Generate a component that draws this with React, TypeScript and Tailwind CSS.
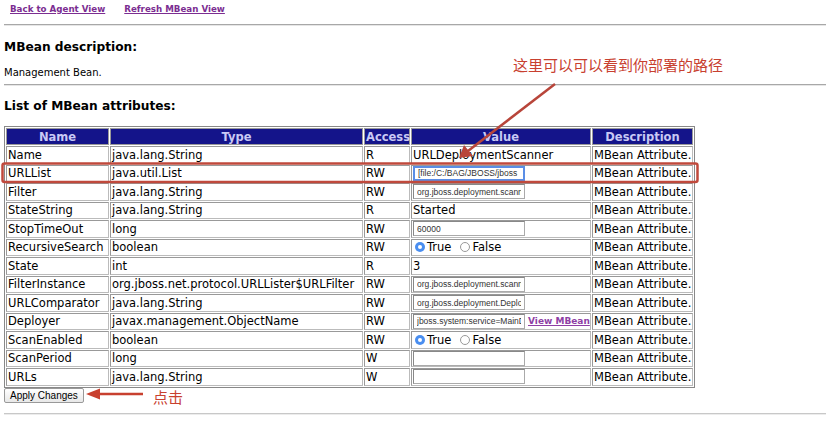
import type { ReactNode } from "react";

type Row = {
  name: string;
  type: string;
  access: string;
  value: ReactNode;
};

function TextBox({ value, focused }: { value?: string; focused?: boolean }) {
  return (
    <input
      readOnly
      value={value ?? ""}
      className={`block h-[15px] w-[112px] bg-white px-[3px] py-0 font-['Liberation_Sans',sans-serif] text-[8.5px] text-[#333] outline-none ${
        focused
          ? "border-2 border-[#5b8ee6]"
          : "border border-[#aaa] border-t-[#888] border-l-[#888]"
      }`}
    />
  );
}

function Radio({ checked }: { checked?: boolean }) {
  if (checked) {
    return (
      <span className="inline-flex h-[10px] w-[10px] items-center justify-center rounded-full bg-[#4a8ef0]">
        <span className="h-[4px] w-[4px] rounded-full bg-white" />
      </span>
    );
  }
  return <span className="inline-block h-[10px] w-[10px] rounded-full border border-[#999] bg-white" />;
}

function BoolValue() {
  return (
    <div className="flex items-center gap-[2px] pl-[2px]">
      <Radio checked />
      <span>True</span>
      <span className="ml-[5px]" />
      <Radio />
      <span>False</span>
    </div>
  );
}

const rows: Row[] = [
  { name: "Name", type: "java.lang.String", access: "R", value: "URLDeploymentScanner" },
  { name: "URLList", type: "java.util.List", access: "RW", value: <TextBox value="[file:/C:/BAG/JBOSS/jboss" focused /> },
  { name: "Filter", type: "java.lang.String", access: "RW", value: <TextBox value="org.jboss.deployment.scanner" /> },
  { name: "StateString", type: "java.lang.String", access: "R", value: "Started" },
  { name: "StopTimeOut", type: "long", access: "RW", value: <TextBox value="60000" /> },
  { name: "RecursiveSearch", type: "boolean", access: "RW", value: <BoolValue /> },
  { name: "State", type: "int", access: "R", value: "3" },
  { name: "FilterInstance", type: "org.jboss.net.protocol.URLLister$URLFilter", access: "RW", value: <TextBox value="org.jboss.deployment.scanner" /> },
  { name: "URLComparator", type: "java.lang.String", access: "RW", value: <TextBox value="org.jboss.deployment.DeploymentSorter" /> },
  {
    name: "Deployer",
    type: "javax.management.ObjectName",
    access: "RW",
    value: (
      <div className="flex items-center gap-[3px]">
        <TextBox value="jboss.system:service=MainDeployer" />
        <a className="text-[9px] font-bold text-[#8e3fa5] underline">View MBean</a>
      </div>
    ),
  },
  { name: "ScanEnabled", type: "boolean", access: "RW", value: <BoolValue /> },
  { name: "ScanPeriod", type: "long", access: "W", value: <TextBox /> },
  { name: "URLs", type: "java.lang.String", access: "W", value: <TextBox /> },
];

const cell = "border border-[#999] border-b-[#bbb] border-r-[#bbb] h-[17.5px] px-[1px] py-0 align-middle whitespace-nowrap";
const head = "border border-[#999] bg-[#14148a] h-[17px] px-[1px] py-0 text-center font-bold text-[#c9c9f5]";

export default function App() {
  return (
    <div className="relative h-[422px] w-[830px] overflow-hidden bg-white px-[4px] font-['DejaVu_Sans',Verdana,sans-serif] text-black">
      {/* Top links */}
      <div className="flex h-[18px] items-center gap-[19px] pl-[6px] pt-[1px] text-[8.7px] font-bold text-[#7b2d91]">
        <a className="underline">Back to Agent View</a>
        <a className="underline">Refresh MBean View</a>
      </div>
      <div className="mt-[6px] h-[2px] border-t border-[#a8a8a8] bg-[#e6e6e6]" />

      {/* Description */}
      <div className="mt-[13px] text-[12.2px] font-bold leading-[16px]">MBean description:</div>
      <div className="mt-[11px] text-[10px] leading-[14px]">Management Bean.</div>
      <div className="mt-[4px] h-[2px] border-t border-[#a8a8a8] bg-[#e6e6e6]" />

      {/* Attributes */}
      <div className="mt-[12px] text-[12.2px] font-bold leading-[16px]">List of MBean attributes:</div>

      <table className="mt-[12px] w-[683px] table-fixed border-separate border-spacing-[1px] border border-[#888] text-[11.5px] leading-[14px]">
        <colgroup>
          <col className="w-[103px]" />
          <col className="w-[253px]" />
          <col className="w-[46px]" />
          <col className="w-[180px]" />
          <col className="w-[101px]" />
        </colgroup>
        <thead>
          <tr>
            <th className={head}>Name</th>
            <th className={head}>Type</th>
            <th className={head}>Access</th>
            <th className={head}>Value</th>
            <th className={head}>Description</th>
          </tr>
        </thead>
        <tbody>
          {rows.map((r) => (
            <tr key={r.name}>
              <td className={cell}>{r.name}</td>
              <td className={cell}>{r.type}</td>
              <td className={cell}>{r.access}</td>
              <td className={cell}>{r.value}</td>
              <td className={cell}>MBean Attribute.</td>
            </tr>
          ))}
        </tbody>
      </table>

      <button className="mt-0 block h-[15px] rounded-[2px] border border-[#999] bg-gradient-to-b from-white to-[#e8e8e8] px-[5px] font-['Liberation_Sans',sans-serif] text-[10px] leading-[13px] text-black">
        Apply Changes
      </button>
      <div className="mt-[10px] h-[2px] border-t border-[#c8c8c8] bg-[#ececec]" />

      {/* Annotations */}
      <div className="absolute left-[513px] top-[55px] font-['Noto_Sans_CJK_SC',sans-serif] text-[15px] leading-[20px] text-[#c8402f]">
        这里可以可以看到你部署的路径
      </div>
      <div className="absolute left-[153px] top-[387px] font-['Noto_Sans_CJK_SC',sans-serif] text-[15px] leading-[20px] text-[#c8402f]">
        点击
      </div>
      <svg className="pointer-events-none absolute left-0 top-0" width="830" height="422">
        <rect x="2.5" y="163.5" width="695" height="18.5" rx="2" fill="none" stroke="#c0493c" strokeWidth="2.5" />
        <line x1="555" y1="84" x2="468" y2="151" stroke="#b8453a" strokeWidth="2.5" />
        <polygon points="459,158 464,145 473,156" fill="#b8453a" />
        <line x1="143" y1="394" x2="97" y2="394" stroke="#c8402f" strokeWidth="2.5" />
        <polygon points="86,394 100,388.5 100,399.5" fill="#c8402f" />
      </svg>
    </div>
  );
}
